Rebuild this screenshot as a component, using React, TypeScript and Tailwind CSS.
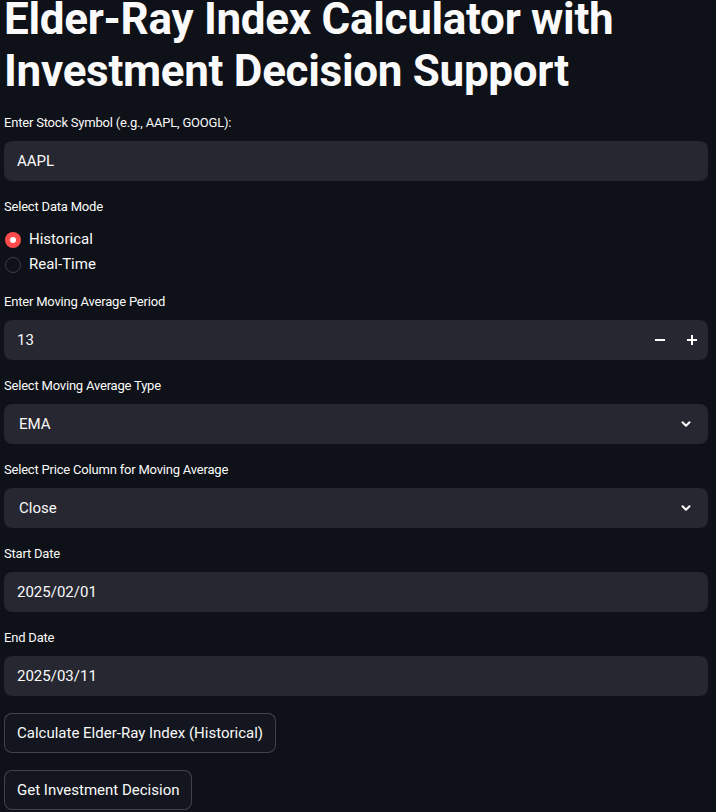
import React from "react";

const font = { fontFamily: '"Source Sans Pro", "Roboto", "Noto Sans", sans-serif' };

function Label({ text }: { text: string }) {
  return <div className="h-6 mb-1 leading-5 text-[13px] tracking-[-0.2px] text-[#fafafa]">{text}</div>;
}

function TextBox({ label, value }: { label: string; value: string }) {
  return (
    <div>
      <Label text={label} />
      <div className="h-10 rounded-lg bg-[#262730] flex items-center px-[13px] text-[15px] text-[#fafafa]">
        {value}
      </div>
    </div>
  );
}

function Chevron() {
  return (
    <svg width="14" height="14" viewBox="0 0 24 24" fill="none" stroke="#fafafa" strokeWidth="3.5" strokeLinecap="round" strokeLinejoin="round">
      <path d="M6 9l6 6 6-6" />
    </svg>
  );
}

function SelectBox({ label, value }: { label: string; value: string }) {
  return (
    <div>
      <Label text={label} />
      <div className="h-10 rounded-lg bg-[#262730] flex items-center justify-between pl-[15px] pr-[15px] text-[15px] text-[#fafafa]">
        <span>{value}</span>
        <Chevron />
      </div>
    </div>
  );
}

function Radio({ text, checked }: { text: string; checked?: boolean }) {
  return (
    <div className="h-[25px] flex items-center gap-2 text-[15px] text-[#fafafa]">
      {checked ? (
        <span className="w-4 h-4 rounded-full bg-[#ff4b4b] flex items-center justify-center">
          <span className="w-[6px] h-[6px] rounded-full bg-white" />
        </span>
      ) : (
        <span className="w-4 h-4 rounded-full border border-[#3d3f48] bg-[#0e1117]" />
      )}
      <span>{text}</span>
    </div>
  );
}

export default function App() {
  return (
    <div className="min-h-screen bg-[#0e1117] text-[#fafafa] overflow-hidden" style={font}>
      <div className="pl-1 pr-2">
        <h1 className="-mt-[7px] mb-4 text-[44px] font-bold leading-[52px] tracking-[-0.3px] text-[#fafafa]">
          Elder-Ray Index Calculator with Investment Decision Support
        </h1>

        <div className="flex flex-col gap-4">
          <TextBox label="Enter Stock Symbol (e.g., AAPL, GOOGL):" value="AAPL" />

          <div>
            <Label text="Select Data Mode" />
            <div className="flex flex-col pl-[1px] pt-[2px] -mb-[1px]">
              <Radio text="Historical" checked />
              <Radio text="Real-Time" />
            </div>
          </div>

          <div>
            <Label text="Enter Moving Average Period" />
            <div className="h-10 rounded-lg bg-[#262730] flex items-center justify-between pl-[13px] text-[15px] text-[#fafafa]">
              <span>13</span>
              <div className="flex items-center h-full">
                <div className="w-8 h-full flex items-center justify-center">
                  <svg width="10" height="10" viewBox="0 0 10 10">
                    <rect x="0" y="4" width="10" height="2" fill="#fafafa" />
                  </svg>
                </div>
                <div className="w-8 h-full flex items-center justify-center">
                  <svg width="10" height="10" viewBox="0 0 10 10">
                    <rect x="0" y="4" width="10" height="2" fill="#fafafa" />
                    <rect x="4" y="0" width="2" height="10" fill="#fafafa" />
                  </svg>
                </div>
              </div>
            </div>
          </div>

          <SelectBox label="Select Moving Average Type" value="EMA" />
          <SelectBox label="Select Price Column for Moving Average" value="Close" />
          <TextBox label="Start Date" value="2025/02/01" />
          <TextBox label="End Date" value="2025/03/11" />

          <div className="flex flex-col items-start gap-[17px] pt-[1px]">
            <button className="h-[40px] px-3 rounded-lg border border-[#fafafa]/20 bg-[#13161e] text-[15px] text-[#fafafa]">
              Calculate Elder-Ray Index (Historical)
            </button>
            <button className="h-[40px] px-3 rounded-lg border border-[#fafafa]/20 bg-[#13161e] text-[15px] text-[#fafafa]">
              Get Investment Decision
            </button>
          </div>
        </div>
      </div>
    </div>
  );
}
